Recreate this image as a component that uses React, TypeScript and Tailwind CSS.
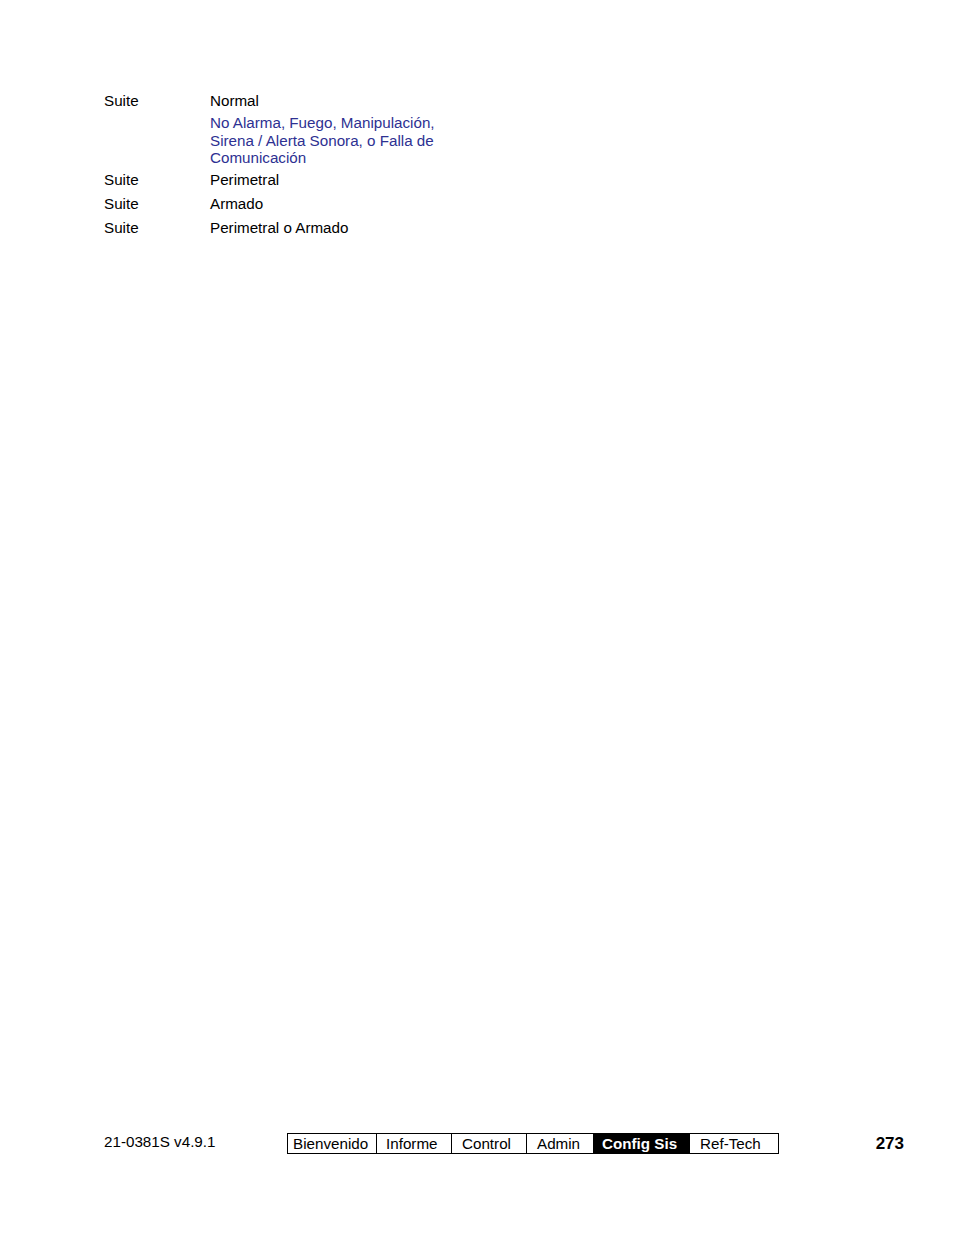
const rows = [
  { label: "Suite", value: "Perimetral", mt: "mt-[4px]" },
  { label: "Suite", value: "Armado", mt: "mt-[7px]" },
  { label: "Suite", value: "Perimetral o Armado", mt: "mt-[7px]" },
];

const tabs = [
  { name: "Bienvenido", w: "w-[88px]", pl: "pl-[5px]" },
  { name: "Informe", w: "w-[75px]", pl: "pl-[9px]" },
  { name: "Control", w: "w-[75px]", pl: "pl-[10px]" },
  { name: "Admin", w: "w-[67px]", pl: "pl-[10px]" },
  { name: "Config Sis", w: "w-[96px]", pl: "pl-[8px]", active: true },
  { name: "Ref-Tech", w: "w-[89px]", pl: "pl-[10px]" },
];

export default function App() {
  return (
    <div className="min-h-[1235px] flex flex-col bg-white text-black font-['Liberation_Sans',Arial,sans-serif] text-[15.2px]">
      <div className="pt-[92px] pl-[104px]">
        <div className="flex leading-[17px]">
          <div className="w-[106px]">Suite</div>
          <div>Normal</div>
        </div>
        <div className="mt-[5px] ml-[106px] w-[250px] leading-[17.5px] text-[#2e3192]">
          No Alarma, Fuego, Manipulación, Sirena / Alerta Sonora, o Falla de Comunicación
        </div>
        {rows.map((r, i) => (
          <div key={i} className={`flex leading-[17px] ${r.mt}`}>
            <div className="w-[106px]">{r.label}</div>
            <div>{r.value}</div>
          </div>
        ))}
      </div>

      <div className="mt-auto mb-[81px] flex items-center pl-[104px] pr-[50px]">
        <div className="w-[183px] leading-[17px] -mt-[4px]">21-0381S v4.9.1</div>
        <div className="flex border border-black h-[21px]">
          {tabs.map((t, i) => (
            <div
              key={t.name}
              className={`${t.w} ${t.pl} flex items-center leading-none ${i > 0 ? "border-l border-black" : ""} ${
                t.active ? "bg-black text-white font-bold" : ""
              }`}
            >
              {t.name}
            </div>
          ))}
        </div>
        <div className="flex-1 text-right font-bold text-[17px] leading-none">273</div>
      </div>
    </div>
  );
}
